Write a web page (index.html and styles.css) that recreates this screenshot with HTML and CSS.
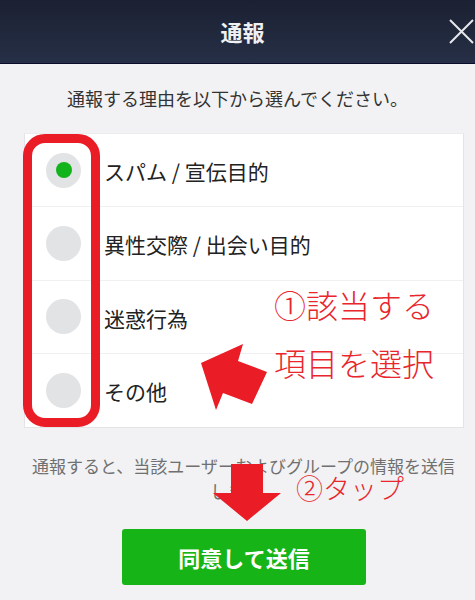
FILE: index.html
```html
<!DOCTYPE html>
<html lang="ja">
<head>
<meta charset="utf-8">
<link rel="stylesheet" href="styles.css">
</head>
<body>
<div class="page">
  <header class="header">
    <h1 class="title">通報</h1>
    <svg class="close" width="25" height="25" viewBox="0 0 25 25"><path d="M1 1 L24 24 M24 1 L1 24" stroke="#e6e8ec" stroke-width="2" fill="none"/></svg>
  </header>
  <p class="lead">通報する理由を以下から選んでください。</p>
  <ul class="list">
    <li class="row"><span class="radio on"><span class="dot"></span></span><span class="label">スパム / 宣伝目的</span></li>
    <li class="row"><span class="radio"></span><span class="label">異性交際 / 出会い目的</span></li>
    <li class="row"><span class="radio"></span><span class="label">迷惑行為</span></li>
    <li class="row"><span class="radio"></span><span class="label">その他</span></li>
  </ul>
  <p class="note"><span>通報すると、当該ユーザーおよびグループの情報を送信</span><span>します。</span></p>
  <div class="actions"><button class="submit">同意して送信</button></div>

  <div class="frame"></div>
  <div class="anno anno1">①該当する<br>項目を選択</div>
  <div class="anno anno2">②タップ</div>
  <svg class="arrows" width="475" height="600" viewBox="0 0 475 600">
    <polygon points="201,363 243,344 238,361 267,372 252,404 223,393 216,410" fill="#ea1c26"/>
    <polygon points="231,464 263,464 263,493 281,493 247,521 213,493 231,493" fill="#ea1c26"/>
  </svg>
</div>
</body>
</html>
```

FILE: styles.css
```css
* { box-sizing: border-box; }
html, body { margin: 0; padding: 0; }
body {
  background: #f2f2f4;
  font-family: "Noto Sans CJK JP", "Noto Sans", sans-serif;
  color: #222;
}
.page {
  position: relative;
  width: 475px;
  height: 600px;
  overflow: hidden;
}
.header {
  height: 64px;
  background: linear-gradient(#1b2132, #262f46);
  border-bottom: 1px solid #0a0e2c;
  display: flex;
  align-items: center;
  justify-content: center;
  padding-left: 10px;
  position: relative;
}
.title {
  margin: 0;
  font-size: 22px;
  font-weight: 700;
  color: #eef0f3;
  line-height: 1;
  padding-bottom: 2px;
}
.close {
  position: absolute;
  right: 1px;
  top: 19px;
}
.lead {
  margin: 21px 0 0;
  text-align: center;
  font-size: 18px;
  line-height: 26px;
  color: #333;
}
.list {
  list-style: none;
  margin: 22px 11px 0 24px;
  padding: 0;
  background: #fff;
  border: 1px solid #e4e4e7;
  border-top-color: #ececee;
}
.row {
  height: 73.5px;
  display: flex;
  align-items: center;
  padding-left: 21px;
  border-top: 1px solid #f0f0f2;
}
.row:first-child { border-top: none; height: 72px; }
.radio {
  width: 35px;
  height: 35px;
  border-radius: 50%;
  background: #e2e3e5;
  display: flex;
  align-items: center;
  justify-content: center;
  flex-shrink: 0;
}
.dot {
  width: 16px;
  height: 16px;
  border-radius: 50%;
  background: #13b31c;
}
.label {
  margin-left: 23px;
  font-size: 21px;
  color: #222;
  padding-top: 2px;
}
.note {
  margin: 25px 12px 0 24px;
  display: flex;
  flex-direction: column;
  align-items: center;
  font-size: 17px;
  line-height: 25px;
  color: #707070;
}
.actions {
  display: flex;
  padding-left: 122px;
  margin-top: 26px;
}
.submit {
  width: 244px;
  height: 56px;
  border: none;
  border-radius: 3px;
  background: #17b417;
  color: #fff;
  font-family: "Noto Sans CJK JP", "Noto Sans", sans-serif;
  font-size: 22px;
  font-weight: 700;
}
.frame {
  position: absolute;
  left: 23px;
  top: 134px;
  width: 77px;
  height: 293px;
  border: 9px solid #ea1c26;
  border-radius: 22px;
}
.anno {
  position: absolute;
  color: #e8262c;
  font-weight: 300;
  white-space: nowrap;
}
.anno1 {
  left: 274px;
  top: 275px;
  font-size: 32px;
  line-height: 58px;
}
.anno2 {
  left: 296px;
  top: 478px;
  font-size: 27px;
  line-height: 20px;
}
.arrows {
  position: absolute;
  left: 0;
  top: 0;
  pointer-events: none;
}
```
